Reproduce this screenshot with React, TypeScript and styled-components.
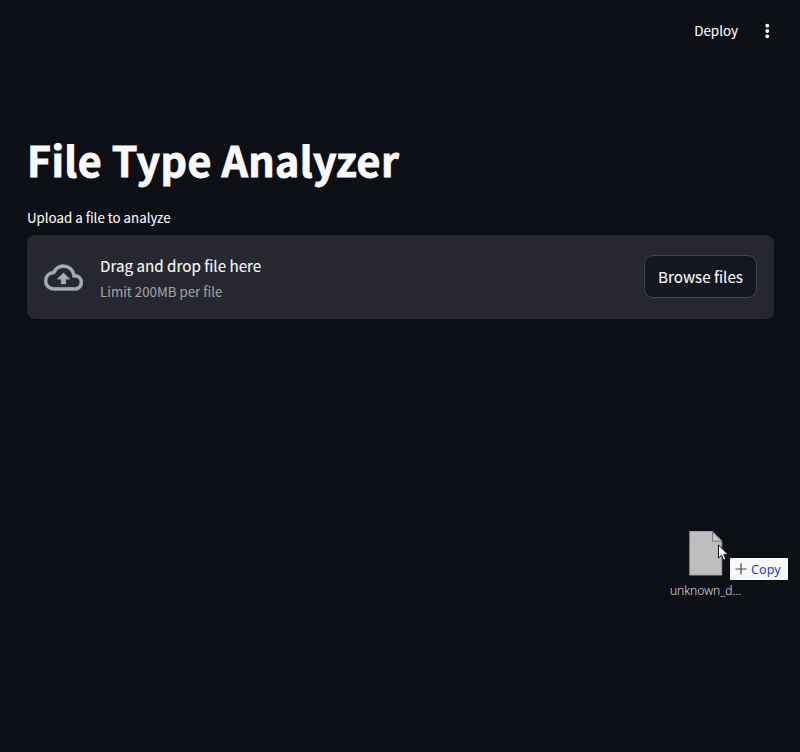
import React from 'react';
import styled, { createGlobalStyle } from 'styled-components';

const GlobalStyle = createGlobalStyle`
  *, *::before, *::after { box-sizing: border-box; }
  body {
    margin: 0;
    background: #0c0f16;
    font-family: "Noto Sans CJK SC", "Noto Sans", sans-serif;
    color: #fafafa;
  }
`;

const Page = styled.div`
  position: relative;
  height: 752px;
  overflow: hidden;
  display: flex;
  flex-direction: column;
  background: #0c0f16;
`;

const Header = styled.header`
  display: flex;
  justify-content: flex-end;
  align-items: center;
  gap: 19px;
  height: 62px;
  padding-right: 23px;
`;

const DeployButton = styled.button`
  border: 0;
  padding: 0 0 2px;
  background: none;
  color: #fafafa;
  font: 400 13.4px/20px "Noto Sans CJK SC", sans-serif;
  -webkit-text-stroke: 0.1px;
`;

const MenuButton = styled.button`
  display: flex;
  border: 0;
  padding: 0;
  background: none;
  color: #fafafa;
`;

const Main = styled.main`
  display: flex;
  flex-direction: column;
  padding: 69px 26px 0 27px;
`;

const Title = styled.h1`
  margin: 0;
  font-size: 41.2px;
  font-weight: 700;
  line-height: 56px;
  letter-spacing: 0.36px;
  white-space: nowrap;
  -webkit-text-stroke: 0.9px;
`;

const Label = styled.label`
  margin-top: 21px;
  font-size: 13.3px;
  line-height: 20px;
  -webkit-text-stroke: 0.1px;
`;

const Dropzone = styled.section`
  display: flex;
  align-items: center;
  height: 84px;
  margin-top: 7px;
  padding: 0 17px;
  border-radius: 8px;
  background: #262730;
`;

const CloudIcon = styled.svg`
  flex: none;
  width: 39px;
  height: 39px;
  fill: #a6abbb;
  stroke: #a6abbb;
  stroke-width: 0.2;
`;

const Instructions = styled.div`
  display: flex;
  flex: 1;
  flex-direction: column;
  gap: 4px;
  margin-left: 17px;
`;

const Prompt = styled.span`
  font-size: 15.2px;
  line-height: 24px;
  -webkit-text-stroke: 0.1px;
`;

const Limit = styled.span`
  font-size: 13.3px;
  line-height: 21px;
  color: #a1a2a8;
  -webkit-text-stroke: 0.1px;
`;

const BrowseButton = styled.button`
  width: 113px;
  height: 43px;
  margin: 0 0 1px;
  padding: 0 0 1px;
  border: 1px solid #41424b;
  border-radius: 9px;
  background: #131720;
  color: #fafafa;
  font: 400 15.2px/24px "Noto Sans CJK SC", sans-serif;
  white-space: nowrap;
  -webkit-text-stroke: 0.1px;
`;

const DragPreview = styled.div`
  position: absolute;
  left: 665px;
  top: 530px;
  width: 81px;
  display: flex;
  flex-direction: column;
  align-items: center;
`;

const FileIcon = styled.svg`
  width: 34px;
  height: 47px;
`;

const FileName = styled.span`
  margin-top: 5px;
  font: 300 12.1px/18px "Open Sans", sans-serif;
  color: #dedede;
  white-space: nowrap;
  -webkit-text-stroke: 0.1px;
`;

const Pointer = styled.svg`
  position: absolute;
  left: 717px;
  top: 544px;
  width: 12px;
  height: 18px;
`;

const CopyBadge = styled.div`
  position: absolute;
  left: 730px;
  top: 558px;
  width: 58px;
  height: 22px;
  display: flex;
  align-items: center;
  gap: 4px;
  padding-left: 5px;
  border-radius: 1px;
  background: #f8f8f9;
  color: #2048c4;
  font: 400 12.7px/20px "Noto Sans", sans-serif;
`;

export default function App() {
  return (
    <Page>
      <GlobalStyle />
      <Header>
        <DeployButton>Deploy</DeployButton>
        <MenuButton aria-label="Menu">
          <svg width="20" height="20" viewBox="0 0 20 20" fill="currentColor">
            <circle cx="10.3" cy="4.7" r="1.9" />
            <circle cx="10.3" cy="10" r="1.9" />
            <circle cx="10.3" cy="15.3" r="1.9" />
          </svg>
        </MenuButton>
      </Header>
      <Main>
        <Title>File Type Analyzer</Title>
        <Label>Upload a file to analyze</Label>
        <Dropzone>
          <CloudIcon viewBox="0 0 24 24">
            <path d="M19.35 10.04A7.49 7.49 0 0 0 12 4C9.11 4 6.6 5.64 5.35 8.04A5.994 5.994 0 0 0 0 14c0 3.31 2.69 6 6 6h13c2.76 0 5-2.24 5-5 0-2.64-2.05-4.78-4.65-4.96zM19 18H6c-2.21 0-4-1.79-4-4 0-2.05 1.53-3.76 3.56-3.97l1.07-.11.5-.95A5.469 5.469 0 0 1 12 6c2.62 0 4.88 1.86 5.39 4.43l.3 1.5 1.53.11A2.98 2.98 0 0 1 22 15c0 1.65-1.35 3-3 3zM8 13h2.55v3h2.9v-3H16l-4-4z" />
          </CloudIcon>
          <Instructions>
            <Prompt>Drag and drop file here</Prompt>
            <Limit>Limit 200MB per file</Limit>
          </Instructions>
          <BrowseButton>Browse files</BrowseButton>
        </Dropzone>
      </Main>
      <DragPreview>
        <FileIcon viewBox="0 0 34 47">
          <path d="M.8 1.5h22.7l9.2 9.2v34.3H.8z" fill="#bebebe" stroke="#a2a2a2" />
          <path d="M23.5 1.5v9.7h9.2z" fill="#c8c8c8" stroke="#777" />
        </FileIcon>
        <FileName>unknown_d...</FileName>
      </DragPreview>
      <Pointer viewBox="0 0 12 18">
        <path d="M1.5 1v13l3-2.8 2.1 5 2.3-1-2.1-4.8H11z" fill="#fff" stroke="#111" strokeWidth="1" />
      </Pointer>
      <CopyBadge>
        <svg width="12" height="12" viewBox="0 0 12 12" stroke="#444" strokeWidth="1.2">
          <path d="M6 .5v11M.5 6h11" />
        </svg>
        Copy
      </CopyBadge>
    </Page>
  );
}
